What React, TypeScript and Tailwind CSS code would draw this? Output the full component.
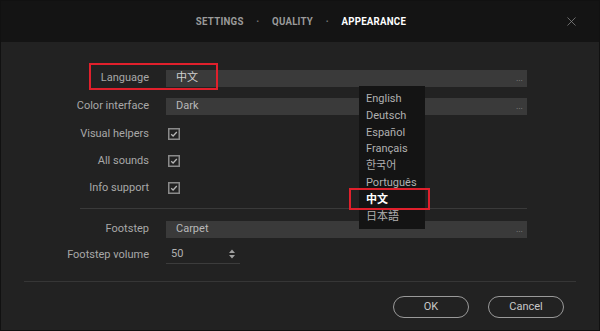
import { X } from "lucide-react";

const font = { fontFamily: "Roboto, 'Noto Sans CJK SC', sans-serif" };

function Checkbox() {
  return (
    <svg width="12" height="12" viewBox="0 0 12 12" className="block">
      <rect x="0.75" y="0.75" width="10.5" height="10.5" fill="none" stroke="#8a8a8a" strokeWidth="1.5" />
      <path d="M3.2 6.2 L5.1 8 L8.8 4" fill="none" stroke="#b5b5b5" strokeWidth="1.3" />
    </svg>
  );
}

function Row({ label, h, children }: { label: string; h: string; children: React.ReactNode }) {
  return (
    <div className={`flex items-center ${h}`}>
      <div className="w-[148px] shrink-0 text-right text-[11px] text-[#a8a8a8]">{label}</div>
      <div className="ml-[17px] flex flex-1 items-center">{children}</div>
    </div>
  );
}

function Field({ value, light }: { value: string; light?: boolean }) {
  return (
    <div className="flex h-[17px] flex-1 items-center justify-between bg-[#3a3a3a] pl-[10px] pr-[4px]">
      <span className={light ? "text-[11px] text-[#d0d0d0]" : "text-[11px] text-[#b8b8b8]"}>{value}</span>
      <span className="text-[9px] leading-none text-[#8a8a8a]">...</span>
    </div>
  );
}

const languages = ["English", "Deutsch", "Español", "Français", "한국어", "Português", "中文", "日本語"];

export default function App() {
  return (
    <div className="flex h-[331px] w-[600px] flex-col border border-[#111] bg-[#222]" style={font}>
      <div className="relative flex h-[41px] shrink-0 items-center justify-center bg-[#141414]">
        <div className="flex scale-x-[0.84] items-center gap-[15px] pl-[2px] text-[11.5px] font-bold tracking-[0.3px]">
          <span className="text-[#9a9a9a]">SETTINGS</span>
          <span className="text-[#777]">·</span>
          <span className="text-[#9a9a9a]">QUALITY</span>
          <span className="text-[#777]">·</span>
          <span className="text-white">APPEARANCE</span>
        </div>
        <X className="absolute right-[20px] top-[13px] text-[#888]" size={15} strokeWidth={1.2} />
      </div>

      <div className="relative flex flex-1 flex-col pt-[22px]">
        <div className="pr-[72px]">
          <Row label="Language" h="h-[28px]">
            <Field value="中文" light />
          </Row>
          <Row label="Color interface" h="h-[28px]">
            <Field value="Dark" />
          </Row>
          <Row label="Visual helpers" h="h-[28px]">
            <div className="ml-[2px]"><Checkbox /></div>
          </Row>
          <Row label="All sounds" h="h-[26px]">
            <div className="ml-[2px]"><Checkbox /></div>
          </Row>
          <Row label="Info support" h="h-[28px]">
            <div className="ml-[2px]"><Checkbox /></div>
          </Row>
        </div>
        <div className="ml-[79px] mr-[72px] mt-[6px] h-px bg-[#3a3a3a]" />
        <div className="pr-[72px]">
          <Row label="Footstep" h="h-[26px] mt-[7px]">
            <Field value="Carpet" />
          </Row>
          <Row label="Footstep volume" h="h-[26px]">
            <div className="flex w-[74px] items-center justify-between border-b border-[#3c3c3c] pb-[1px] pl-[5px] pr-[5px]">
              <span className="text-[11px] text-[#b0b0b0]">50</span>
              <svg width="6" height="10" viewBox="0 0 6 10">
                <path d="M0 4 L3 0.5 L6 4 Z M0 6 L3 9.5 L6 6 Z" fill="#a0a0a0" />
              </svg>
            </div>
          </Row>
        </div>
        <div className="mx-[23px] mt-[13px] h-px bg-[#363636]" />
        <div className="mt-[14px] flex justify-end gap-[19px] pr-[35px]">
          <button className="h-[22px] w-[76px] rounded-full border-[1.5px] border-[#9a9a9a] text-[11px] text-[#c8c8c8]">OK</button>
          <button className="h-[22px] w-[76px] rounded-full border-[1.5px] border-[#9a9a9a] text-[11px] text-[#c8c8c8]">Cancel</button>
        </div>

        <div className="absolute left-[88px] top-[21px] h-[27px] w-[129px] border-2 border-[#e0202c]" />

        <div className="absolute left-[358px] top-[44px] flex w-[66px] flex-col bg-[#141414] pb-[4px] pl-[7px] pt-[5px]">
          {languages.map((l) => (
            <div
              key={l}
              className={
                l === "中文"
                  ? "h-[16.8px] text-[11px] font-bold leading-[16.8px] text-white"
                  : "h-[16.8px] text-[11px] leading-[16.8px] text-[#b0b0b0]"
              }
            >
              {l}
            </div>
          ))}
        </div>
        <div className="absolute left-[348px] top-[146px] h-[22px] w-[81px] border-2 border-[#e0202c]" />
      </div>
    </div>
  );
}
